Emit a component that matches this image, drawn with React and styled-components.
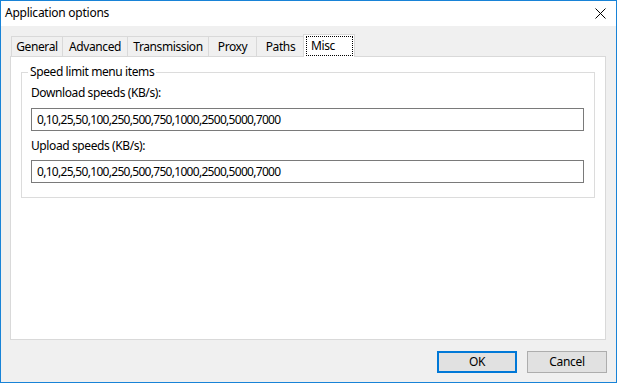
import React from "react";
import styled, { createGlobalStyle } from "styled-components";

const GlobalStyle = createGlobalStyle`
  html, body {
    margin: 0;
    padding: 0;
    background: #ffffff;
  }
  body {
    font-family: "Noto Sans", "Open Sans", sans-serif;
    font-size: 12px;
    letter-spacing: -0.4px;
    color: #000000;
  }
  * {
    box-sizing: border-box;
  }
`;

const Window = styled.div`
  width: 617px;
  height: 383px;
  border: 1px solid #1883d7;
  display: flex;
  flex-direction: column;
  background: #f0f0f0;
  overflow: hidden;
`;

const TitleBar = styled.div`
  height: 25px;
  background: #ffffff;
  display: flex;
  align-items: center;
  justify-content: space-between;
  padding-left: 4px;
`;

const Title = styled.span`
  font-size: 12px;
  line-height: 16px;
  letter-spacing: -0.25px;
  margin-top: -1px;
`;

const CloseButton = styled.div`
  width: 30px;
  height: 25px;
  display: flex;
  align-items: center;
  justify-content: center;
  margin-right: 1px;
`;

const Body = styled.div`
  flex: 1;
  display: flex;
  flex-direction: column;
  padding: 8px 10px 9px 9px;
`;

const TabStrip = styled.div`
  height: 22px;
  display: flex;
  align-items: flex-end;
  padding-left: 1px;
`;

const Tab = styled.div`
  position: relative;
  width: ${(p) => p.$w}px;
  height: ${(p) => (p.$active ? 23 : 20)}px;
  margin-left: ${(p) => (p.$active ? -2 : p.$first ? 0 : -1)}px;
  margin-bottom: ${(p) => (p.$active ? -1 : 0)}px;
  z-index: ${(p) => (p.$active ? 2 : 1)};
  border: 1px solid #d9d9d9;
  border-bottom: none;
  background: ${(p) => (p.$active ? "#ffffff" : "#f0f0f0")};
  display: flex;
  align-items: center;
  justify-content: center;
  line-height: 16px;
  white-space: nowrap;
`;

const FocusLabel = styled.span`
  flex: 1;
  align-self: stretch;
  margin: 1px 1px 1px 2px;
  padding-left: 4px;
  border: 1px dotted #000000;
  display: flex;
  align-items: center;
  justify-content: flex-start;
`;

const TabPanel = styled.div`
  flex: 1;
  background: #ffffff;
  border: 1px solid #d9d9d9;
  display: flex;
  flex-direction: column;
`;

const GroupBox = styled.fieldset`
  margin: 7px 10px 0 10px;
  padding: 5px 10px 14px 9px;
  border: 1px solid #dcdcdc;
  min-width: 0;
`;

const Legend = styled.legend`
  padding: 0 2px;
  margin-left: -3px;
  line-height: 16px;
`;

const FieldLabel = styled.div`
  line-height: 16px;
  margin-top: ${(p) => (p.$first ? 0 : 7)}px;
  margin-bottom: ${(p) => (p.$first ? 7 : 6)}px;
`;

const TextField = styled.input`
  display: block;
  width: 100%;
  height: 23px;
  border: 1px solid #7a7a7a;
  padding: 0 5px;
  font-family: inherit;
  font-size: 12px;
  letter-spacing: -0.7px;
  color: #000000;
  background: #ffffff;
  outline: none;
`;

const ButtonRow = styled.div`
  margin-top: 11px;
  margin-right: -1px;
  display: flex;
  justify-content: flex-end;
  gap: 10px;
`;

const DialogButton = styled.button`
  width: 80px;
  height: 22px;
  padding: 0;
  background: #e1e1e1;
  border: ${(p) => (p.$primary ? "2px solid #0078d7" : "1px solid #adadad")};
  font-family: inherit;
  font-size: 12px;
  letter-spacing: -0.3px;
  color: #000000;
  line-height: 16px;
`;

const tabs = [
  { name: "General", w: 52 },
  { name: "Advanced", w: 66 },
  { name: "Transmission", w: 82 },
  { name: "Proxy", w: 49 },
  { name: "Paths", w: 49 },
  { name: "Misc", w: 52, active: true },
];

const speeds = "0,10,25,50,100,250,500,750,1000,2500,5000,7000";

export default function App() {
  return (
    <>
      <GlobalStyle />
      <Window>
        <TitleBar>
          <Title>Application options</Title>
          <CloseButton>
            <svg width="11" height="11" viewBox="0 0 11 11">
              <path d="M0.5 0.5 L10.5 10.5 M10.5 0.5 L0.5 10.5" stroke="#000" strokeWidth="1" />
            </svg>
          </CloseButton>
        </TitleBar>
        <Body>
          <TabStrip>
            {tabs.map((t, i) => (
              <Tab key={t.name} $w={t.w} $active={t.active} $first={i === 0}>
                {t.active ? <FocusLabel>{t.name}</FocusLabel> : t.name}
              </Tab>
            ))}
          </TabStrip>
          <TabPanel>
            <GroupBox>
              <Legend>Speed limit menu items</Legend>
              <FieldLabel $first>Download speeds (KB/s):</FieldLabel>
              <TextField defaultValue={speeds} />
              <FieldLabel>Upload speeds (KB/s):</FieldLabel>
              <TextField defaultValue={speeds} />
            </GroupBox>
          </TabPanel>
          <ButtonRow>
            <DialogButton $primary>OK</DialogButton>
            <DialogButton>Cancel</DialogButton>
          </ButtonRow>
        </Body>
      </Window>
    </>
  );
}
